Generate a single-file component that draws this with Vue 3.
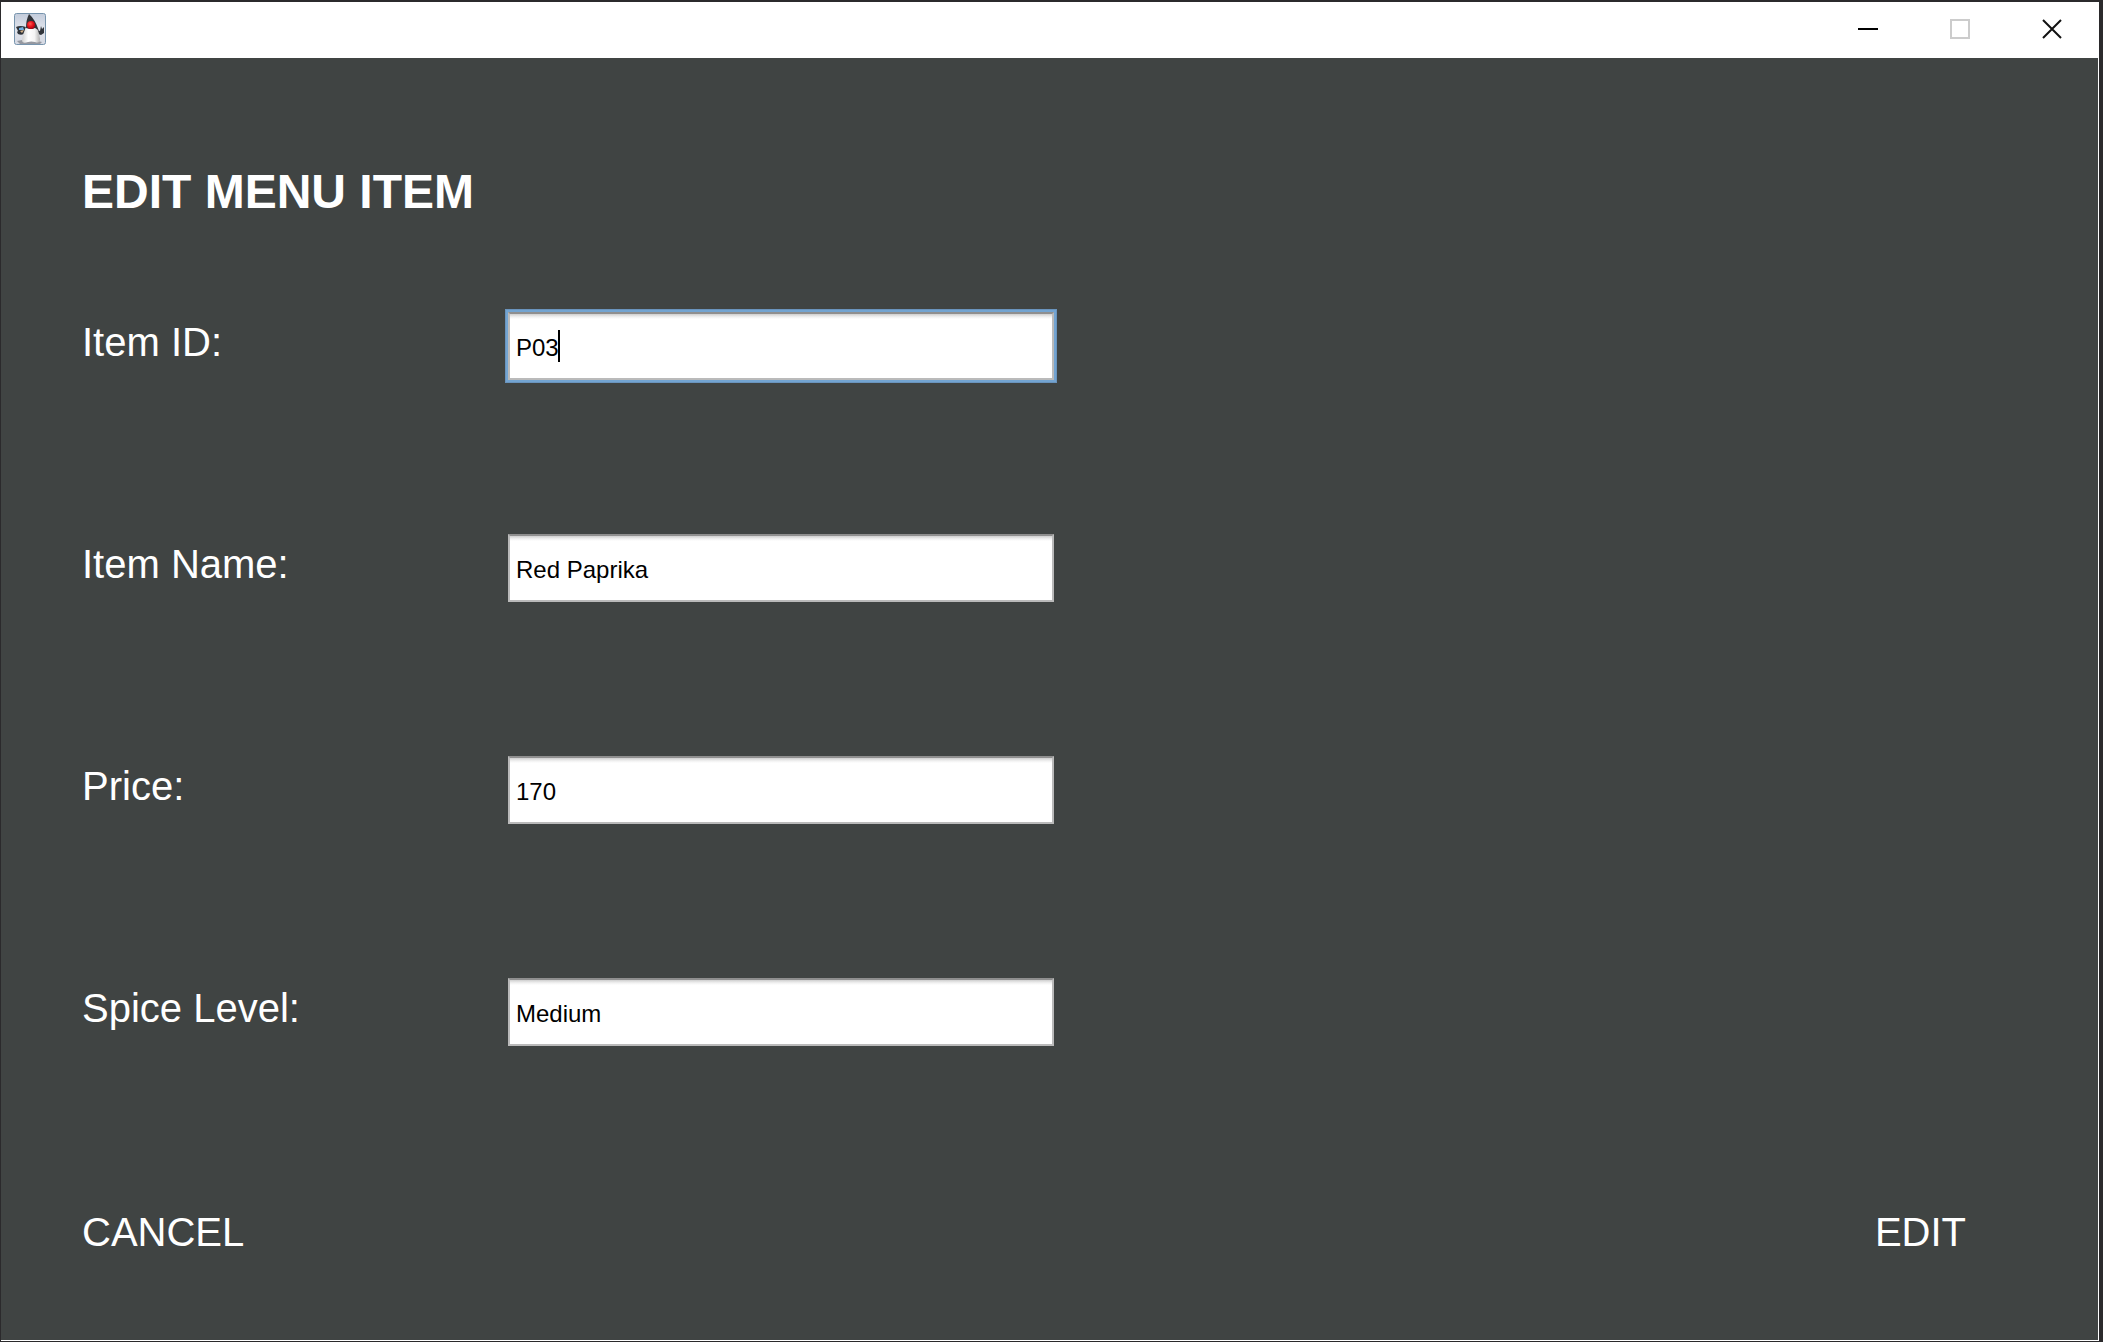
<script setup>
import { ref, onMounted } from 'vue'

const fields = ref([
  { id: 'item-id', label: 'Item ID:', value: 'P03' },
  { id: 'item-name', label: 'Item Name:', value: 'Red Paprika' },
  { id: 'price', label: 'Price:', value: '170' },
  { id: 'spice-level', label: 'Spice Level:', value: 'Medium' },
])
const form = ref(null)

onMounted(() => {
  const first = form.value.querySelector('input')
  first.focus({ preventScroll: true })
  first.setSelectionRange(first.value.length, first.value.length)
})
</script>

<template>
  <div class="desktop">
    <div class="window">
      <header class="titlebar">
        <svg class="app-icon" viewBox="0 0 32 32" aria-hidden="true">
          <defs>
            <linearGradient id="tile" x1="0" y1="0" x2="0" y2="1">
              <stop offset="0" stop-color="#c3ccdb" />
              <stop offset="0.5" stop-color="#e1e4ec" />
              <stop offset="1" stop-color="#d4d8e2" />
            </linearGradient>
            <linearGradient id="belly" x1="0" y1="0" x2="1" y2="0">
              <stop offset="0" stop-color="#d0d0d0" />
              <stop offset="0.35" stop-color="#ffffff" />
              <stop offset="0.7" stop-color="#f4f4f4" />
              <stop offset="1" stop-color="#b0b0b0" />
            </linearGradient>
            <radialGradient id="nose" cx="0.4" cy="0.35" r="0.7">
              <stop offset="0" stop-color="#ff5a50" />
              <stop offset="0.5" stop-color="#e8141c" />
              <stop offset="1" stop-color="#a00010" />
            </radialGradient>
          </defs>
          <rect x="0.5" y="0.5" width="31" height="31" rx="2" fill="url(#tile)" stroke="#7794ad" />
          <path d="M3 28 Q15 25 28 29 L26 31 L6 31 Z" fill="#9598a0" />
          <path d="M2 14 Q6 12 12 14 L11 20 Q8 23 4 21 L3 19 L4 18 Z" fill="#30343a" />
          <path d="M5 15 L9 14 L10 17 L5 17 Z" fill="#6faee0" />
          <path d="M6 18 L10 17 L8 20 Z" fill="#d8b48a" />
          <path d="M23 17 L26 18 L27 13 L28 16 L30 14 L30 20 L27 22 L24 21 Z" fill="#30343a" />
          <path d="M12 14 L23 15 Q25 19 26 26 Q26 31 21 29 Q17 28 14 29 Q8 31 8 27 Q9 20 12 14 Z" fill="url(#belly)" />
          <path d="M15 1 Q21 6 25 18 Q23 16 21 15 Q17 17 12 15 Q12 7 15 1 Z" fill="#303338" />
          <circle cx="17" cy="12" r="4" fill="url(#nose)" />
        </svg>
        <div class="controls">
          <button type="button" aria-label="Minimize">
            <svg viewBox="0 0 20 20"><path d="M0 10H20" stroke="#000" stroke-width="2" /></svg>
          </button>
          <button type="button" aria-label="Maximize" disabled>
            <svg viewBox="0 0 20 20"><rect x="1" y="1" width="18" height="18" fill="none" stroke="#ccc" stroke-width="2" /></svg>
          </button>
          <button type="button" aria-label="Close">
            <svg viewBox="0 0 20 20"><path d="M1 1L19 19M19 1L1 19" stroke="#111" stroke-width="2" /></svg>
          </button>
        </div>
      </header>

      <form ref="form" class="content" @submit.prevent>
        <h1>EDIT MENU ITEM</h1>
        <div v-for="field in fields" :key="field.id" class="row">
          <label :for="field.id">{{ field.label }}</label>
          <span class="field">
            <input :id="field.id" v-model="field.value" type="text" autocomplete="off" spellcheck="false" />
            <i v-if="field.id === 'item-id'" class="cursor" aria-hidden="true"></i>
          </span>
        </div>
        <footer class="actions">
          <button type="button">CANCEL</button>
          <button type="submit">EDIT</button>
        </footer>
      </form>
    </div>
  </div>
</template>

<style>
body {
  background: #2b2a2c;
}
</style>

<style scoped>
.desktop {
  box-sizing: border-box;
  min-height: 100vh;
  display: flex;
  padding: 2px 4px 1px 1px;
  background: #2b2a2c;
  font-family: "Liberation Sans", Arial, sans-serif;
}
.window {
  flex: 1;
  display: flex;
  flex-direction: column;
  box-sizing: border-box;
  border-right: 1px solid #fff;
  border-bottom: 1px solid #fff;
  background: #404443;
}
.titlebar {
  box-sizing: border-box;
  height: 56px;
  display: flex;
  align-items: center;
  justify-content: space-between;
  padding: 0 0 2px 13px;
  background: #fff;
}
.app-icon {
  width: 32px;
  height: 32px;
}
.controls {
  display: flex;
}
.controls button {
  width: 92px;
  height: 54px;
  display: flex;
  align-items: center;
  justify-content: center;
  padding: 0;
  border: 0;
  background: none;
}
.controls svg {
  width: 20px;
  height: 20px;
}
.content {
  flex: 1;
  display: flex;
  flex-direction: column;
  padding: 106px 132px 0 81px;
  color: #fff;
}
h1 {
  margin: 0 0 92px;
  font-size: 48px;
  line-height: 56px;
  font-weight: bold;
}
.row {
  display: flex;
  align-items: baseline;
  height: 68px;
  margin-bottom: 154px;
}
label {
  width: 426px;
  font-size: 40px;
  line-height: 48px;
}
.field {
  position: relative;
}
input {
  box-sizing: border-box;
  width: 546px;
  height: 68px;
  padding: 3px 6px 0;
  border: 2px solid #bababa;
  border-top-color: #8f8f8f;
  border-radius: 0;
  outline: 0;
  background: linear-gradient(#cfcfcf, #f2f2f2 3px, #fff 5px);
  color: #000;
  caret-color: transparent;
  font-family: inherit;
  font-size: 24px;
}
#item-id {
  box-shadow: 0 0 0 2px #73a4d1, 0 0 0 3px #6a94bd;
}
.cursor {
  position: absolute;
  left: 50px;
  top: 18px;
  width: 2px;
  height: 32px;
  background: #000;
}
.actions {
  display: flex;
  justify-content: space-between;
  margin-top: 8px;
}
.actions button {
  padding: 0;
  border: 0;
  background: none;
  color: inherit;
  font-family: inherit;
  font-size: 40px;
  line-height: 48px;
}
</style>
